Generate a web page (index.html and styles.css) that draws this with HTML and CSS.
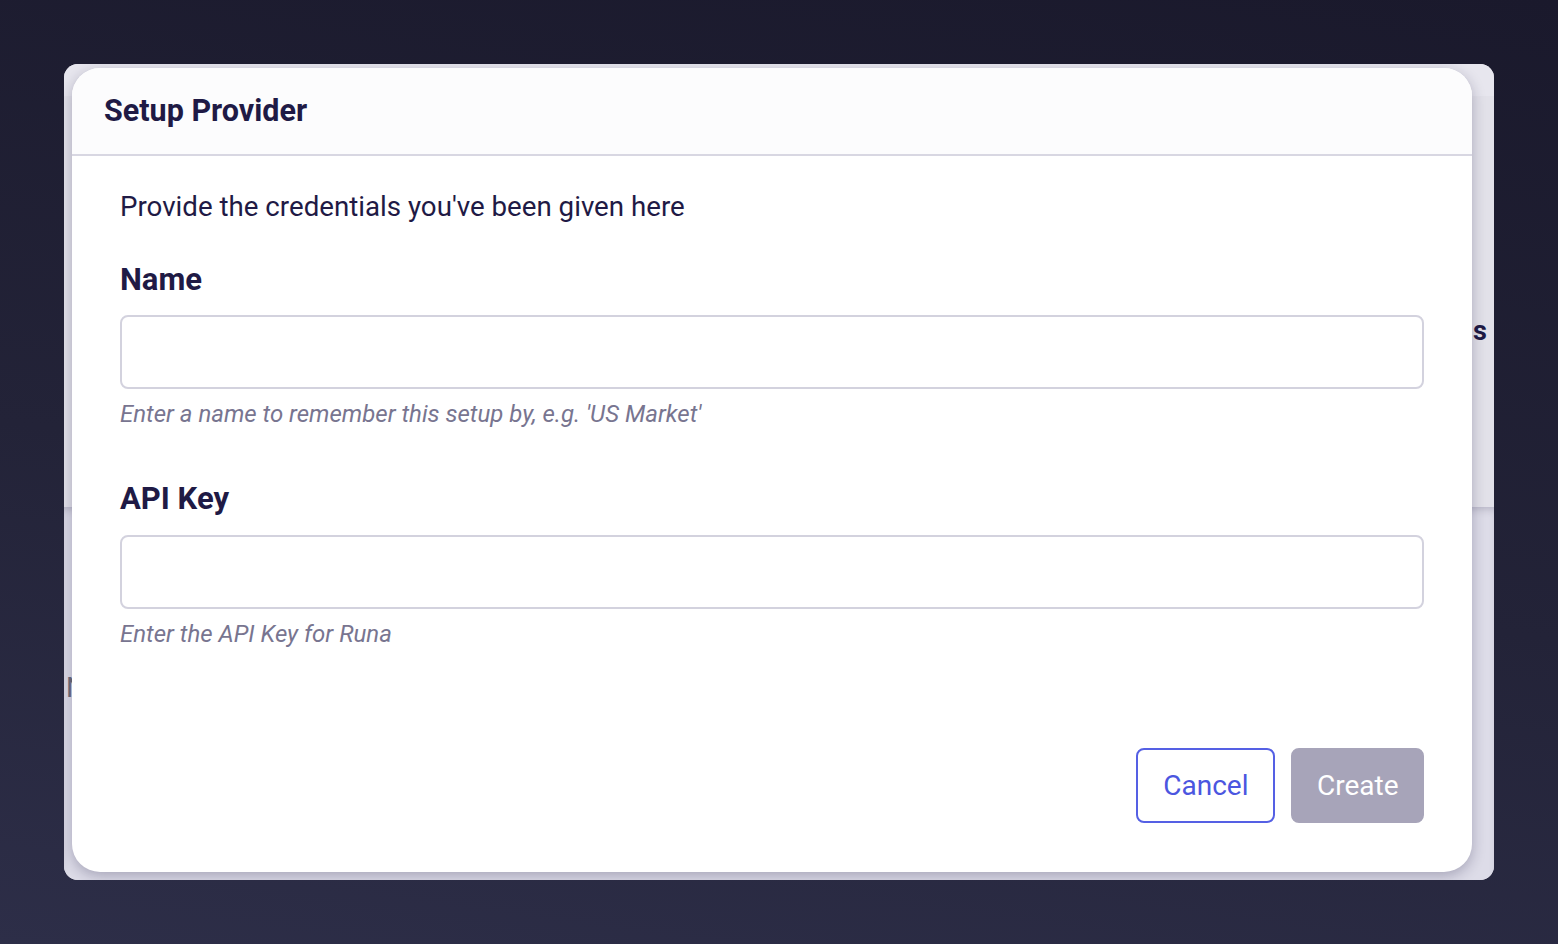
FILE: index.html
```html
<!DOCTYPE html>
<html lang="en">
<head>
<meta charset="utf-8">
<title>Setup Provider</title>
<link rel="stylesheet" href="styles.css">
</head>
<body>
<div class="stage">
  <div class="back-panel">
    <div class="back-top"></div>
    <div class="back-mid"><span class="peek-s">s</span></div>
    <div class="back-low"><span class="peek-n">N</span></div>

    <div class="modal" role="dialog" aria-labelledby="modal-title">
      <div class="modal-header">
        <h2 class="modal-title" id="modal-title">Setup Provider</h2>
      </div>
      <div class="modal-body">
        <p class="intro">Provide the credentials you've been given here</p>

        <div class="field">
          <label class="field-label" for="name">Name</label>
          <input class="field-input" id="name" type="text">
          <div class="field-hint">Enter a name to remember this setup by, e.g. 'US Market'</div>
        </div>

        <div class="field field-second">
          <label class="field-label" for="apikey">API Key</label>
          <input class="field-input" id="apikey" type="text">
          <div class="field-hint">Enter the API Key for Runa</div>
        </div>

        <div class="modal-footer">
          <button class="btn btn-outline" type="button">Cancel</button>
          <button class="btn btn-disabled" type="button">Create</button>
        </div>
      </div>
    </div>
  </div>
</div>
</body>
</html>
```

FILE: styles.css
```css
* {
  box-sizing: border-box;
}

html, body {
  margin: 0;
  height: 100%;
}

body {
  background: linear-gradient(188deg, #1a192c 0%, #232338 55%, #2d2e48 100%);
  font-family: Roboto, "Liberation Sans", sans-serif;
  color: #1f1a45;
  overflow: hidden;
}

.stage {
  padding: 64px 64px 0 64px;
}

.back-panel {
  position: relative;
  width: 1430px;
  height: 816px;
  border-radius: 14px;
  overflow: hidden;
  display: flex;
  flex-direction: column;
  background: #e2e1e9;
}

.back-top {
  height: 32px;
  background: #e7e6ee;
}

.back-mid {
  position: relative;
  height: 411px;
  background: #e2e1e9;
}

.back-low {
  position: relative;
  flex: 1;
  background: #dddce8;
  box-shadow: inset 0 6px 8px -4px rgba(30, 28, 60, 0.22);
}

.peek-s {
  position: absolute;
  left: 1409px;
  top: 219px;
  font-size: 27px;
  font-weight: 700;
  color: #1f1a45;
  line-height: 32px;
}

.peek-n {
  position: absolute;
  left: 2px;
  top: 164px;
  font-size: 28px;
  color: #6c6b78;
  line-height: 33px;
}

.modal {
  position: absolute;
  left: 8px;
  top: 4px;
  width: 1400px;
  background: #ffffff;
  border-radius: 28px;
  box-shadow: 0 4px 14px rgba(25, 22, 60, 0.28);
}

.modal-header {
  height: 88px;
  padding: 0 32px;
  display: flex;
  align-items: center;
  background: #fcfcfd;
  border-radius: 28px 28px 0 0;
  border-bottom: 2px solid #d8d7e2;
}

.modal-title {
  margin: 0;
  font-size: 30.5px;
  font-weight: 700;
  line-height: 36px;
  color: #1f1a45;
}

.modal-body {
  padding: 36px 48px 49px 48px;
  display: flex;
  flex-direction: column;
}

.intro {
  margin: 0;
  font-size: 27.7px;
  line-height: 30px;
  color: #1f1a45;
}

.field {
  display: flex;
  flex-direction: column;
  margin-top: 41px;
}

.field-second {
  margin-top: 54px;
}

.field-label {
  font-size: 31px;
  font-weight: 700;
  line-height: 33px;
  color: #1f1a45;
}

.field-input {
  margin-top: 19px;
  height: 74px;
  width: 100%;
  border: 2px solid #d3d2de;
  border-radius: 8px;
  background: #ffffff;
  font-family: inherit;
  font-size: 26px;
  padding: 0 20px;
  outline: none;
}

.field-second .field-input {
  margin-top: 20px;
}

.field-hint {
  margin-top: 11px;
  font-size: 24px;
  line-height: 28px;
  font-style: italic;
  color: #787590;
}

.modal-footer {
  margin-top: 100px;
  display: flex;
  justify-content: flex-end;
  gap: 16px;
}

.btn {
  font-family: inherit;
  font-size: 28px;
  line-height: 33px;
  padding: 19px 24px;
  border-radius: 8px;
  border: 2px solid transparent;
  cursor: pointer;
}

.btn-outline {
  padding: 19px 25px;
  background: #ffffff;
  border-color: #5560e4;
  color: #4b56e0;
}

.btn-disabled {
  padding: 19px 23.5px;
  background: #a7a4b9;
  border-color: #a7a4b9;
  color: #ffffff;
  cursor: default;
}
```
